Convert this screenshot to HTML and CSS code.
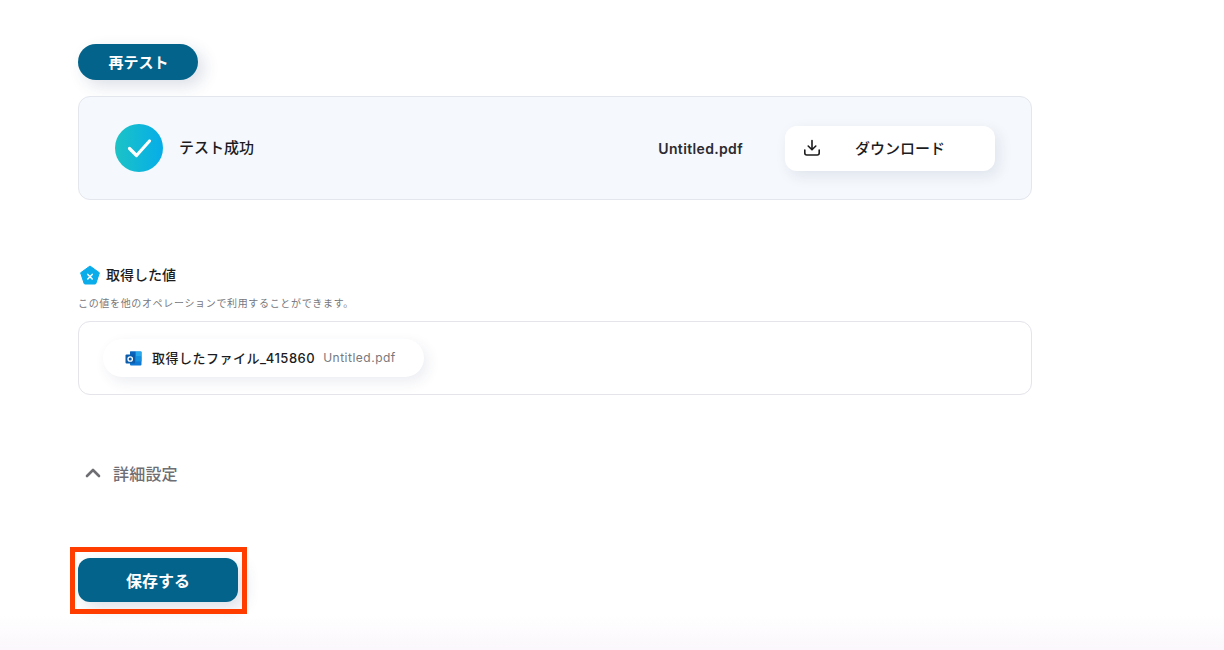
FILE: index.html
```html
<!DOCTYPE html>
<html lang="ja">
<head>
<meta charset="utf-8">
<title>テスト</title>
<link rel="stylesheet" href="styles.css">
</head>
<body>
<main class="page">
  <button class="retest">再テスト</button>
  <section class="result">
    <div class="status">
      <span class="check">
        <svg width="48" height="48" viewBox="0 0 48 48"><path d="M14.5 24.5 L21.5 31.5 L34.5 17" fill="none" stroke="#fff" stroke-width="3.2" stroke-linecap="round" stroke-linejoin="round"/></svg>
      </span>
      <span class="status-text">テスト成功</span>
    </div>
    <div class="file">
      <span class="file-name">Untitled.pdf</span>
      <button class="download">
        <svg width="18" height="18" viewBox="0 0 18 18"><path d="M9 1.5 V10.5 M5.2 7 L9 10.8 L12.8 7 M1.8 11 V14 Q1.8 16 3.8 16 H14.2 Q16.2 16 16.2 14 V11" fill="none" stroke="#1c1c1e" stroke-width="1.6" stroke-linecap="round" stroke-linejoin="round"/></svg>
        <span class="download-text">ダウンロード</span>
      </button>
    </div>
  </section>

  <div class="values-head">
    <svg width="20" height="20" viewBox="0 0 20 20"><path d="M10 1 L19.4 7.8 L15.9 18.4 Q15.7 19 15 19 H5 Q4.3 19 4.1 18.4 L.6 7.8 Z" fill="#0bacea" stroke="#0bacea" stroke-linejoin="round"/><path d="M7.8 9.4 L12.2 14 M12.2 9.4 L7.8 14" stroke="#fff" stroke-width="1.5" stroke-linecap="round"/></svg>
    <span class="values-title">取得した値</span>
  </div>
  <p class="hint">この値を他のオペレーションで利用することができます。</p>
  <section class="values">
    <div class="chip">
      <svg width="17" height="17" viewBox="0 0 17 17"><rect x="5" y="1.5" width="11.5" height="14" rx="1" fill="#0f78d4"/><rect x="5" y="1.5" width="5.7" height="5" fill="#0a64bd"/><rect x="10.7" y="1.5" width="5.8" height="5" fill="#28a8ea"/><rect x="10.7" y="6.5" width="5.8" height="5" fill="#1490df"/><rect x="0.5" y="4.5" width="9.5" height="9" rx="1" fill="#0b5cab"/><circle cx="5.2" cy="9" r="2.2" fill="none" stroke="#fff" stroke-width="1.3"/></svg>
      <span class="chip-name">取得したファイル_415860</span>
      <span class="chip-file">Untitled.pdf</span>
    </div>
  </section>

  <div class="details">
    <svg width="16" height="10" viewBox="0 0 16 10"><path d="M2 8 L8 2 L14 8" fill="none" stroke="#6e6e73" stroke-width="2.6" stroke-linecap="round" stroke-linejoin="round"/></svg>
    <span class="details-text">詳細設定</span>
  </div>

  <button class="save">保存する</button>
</main>
<div class="highlight"></div>
<div class="fade"></div>
</body>
</html>
```
FILE: styles.css
```css
* { box-sizing: border-box; }
html, body { margin: 0; height: 650px; overflow: hidden; background: #fff; }
body {
  position: relative;
  font-family: Inter, "Noto Sans CJK JP", sans-serif;
  color: #1c1c1e;
}
button { border: 0; font-family: inherit; padding: 0; }
.page { width: 1032px; padding: 44px 0 0 78px; display: flex; flex-direction: column; align-items: flex-start; }

.retest {
  width: 120px; height: 36px; border-radius: 18px;
  background: #03638a; color: #fff;
  padding: 0 0 2px 1px;
  font-size: 15px; font-weight: 600;
  box-shadow: 6px 6px 16px rgba(40, 60, 110, .16);
}
.result {
  margin-top: 16px; width: 954px; height: 104px;
  background: #f5f8fc;
  border: 1px solid #e4e6ee; border-radius: 12px;
  padding: 0 36px;
  display: flex; justify-content: space-between; align-items: center;
}
.status { display: flex; align-items: center; gap: 16px; }
.check {
  width: 48px; height: 48px; border-radius: 50%; display: block;
  background: linear-gradient(90deg, #1cc3c5, #05ade9);
}
.check svg { display: block; }
.status-text { font-size: 15px; font-weight: 500; padding-bottom: 3px; }
.file { display: flex; align-items: center; gap: 42px; }
.file-name { font-size: 14px; font-weight: 600; letter-spacing: .35px; color: #2b2b30; }
.download {
  width: 210px; height: 45px; border-radius: 12px; background: #fff;
  display: flex; align-items: center; padding-left: 18px;
  box-shadow: 4px 5px 14px rgba(40, 60, 110, .1);
  color: #1c1c1e;
}
.download-text { margin-left: 34px; font-size: 15px; font-weight: 500; padding-bottom: 2px; }

.values-head { margin-top: 65px; margin-left: 2px; display: flex; align-items: center; gap: 6px; height: 20px; }
.values-head svg { display: block; }
.values-title { font-size: 14px; font-weight: 500; padding-bottom: 2px; }
.hint { margin: 11px 0 0; font-size: 10px; letter-spacing: .66px; line-height: 14px; color: #77777c; }
.values {
  margin-top: 11px; width: 954px; height: 74px;
  border: 1px solid #e4e4ea; border-radius: 12px;
  padding: 17px 24px;
}
.chip {
  width: 321px; height: 38px; border-radius: 19px; background: #fff;
  display: flex; align-items: center; padding-left: 22px;
  box-shadow: 4px 5px 14px rgba(40, 60, 110, .09);
}
.chip svg { display: block; }
.chip-name { margin-left: 10px; font-size: 13px; font-weight: 500; letter-spacing: .5px; padding-bottom: 2px; }
.chip-file { margin-left: 8px; font-size: 12px; color: #77777c; letter-spacing: .5px; padding-bottom: 2px; }

.details { margin-top: 67px; margin-left: 7px; display: flex; align-items: center; gap: 12px; height: 22px; }
.details svg { display: block; }
.details-text { font-size: 16px; font-weight: 500; letter-spacing: .2px; color: #6e6e73; }

.save {
  margin-top: 74px; width: 160px; height: 44px; border-radius: 12px;
  background: #03638a; color: #fff;
  font-size: 16px; font-weight: 600;
  padding-bottom: 1px;
  box-shadow: 6px 6px 16px rgba(40, 60, 110, .16);
}

.highlight {
  position: absolute; left: 70px; top: 547px; width: 177px; height: 67px;
  border: 5px solid #ff3d00;
}
.fade {
  position: absolute; left: 0; right: 0; bottom: 0; height: 34px;
  background: linear-gradient(180deg, rgba(250, 245, 252, 0), #fbf7fc);
}
```
